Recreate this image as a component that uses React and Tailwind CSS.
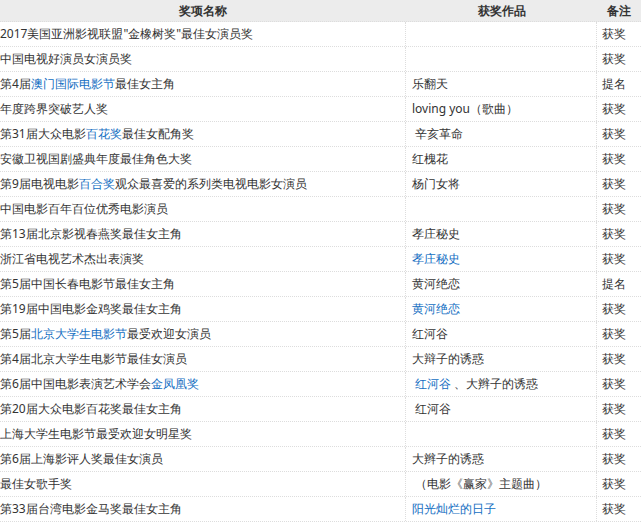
const rows = [
  [['2017美国亚洲影视联盟"金橡树奖"最佳女演员奖'], [''], '获奖'],
  [['中国电视好演员女演员奖'], [''], '获奖'],
  [['第4届', ['澳门国际电影节'], '最佳女主角'], ['乐翻天'], '提名'],
  [['年度跨界突破艺人奖'], ['loving you（歌曲）'], '获奖'],
  [['第31届大众电影', ['百花奖'], '最佳女配角奖'], [' 辛亥革命'], '获奖'],
  [['安徽卫视国剧盛典年度最佳角色大奖'], ['红槐花'], '获奖'],
  [['第9届电视电影', ['百合奖'], '观众最喜爱的系列类电视电影女演员'], ['杨门女将'], '获奖'],
  [['中国电影百年百位优秀电影演员'], [''], '获奖'],
  [['第13届北京影视春燕奖最佳女主角'], ['孝庄秘史'], '获奖'],
  [['浙江省电视艺术杰出表演奖'], [['孝庄秘史']], '获奖'],
  [['第5届中国长春电影节最佳女主角'], ['黄河绝恋'], '提名'],
  [['第19届中国电影金鸡奖最佳女主角'], [['黄河绝恋']], '获奖'],
  [['第5届', ['北京大学生电影节'], '最受欢迎女演员'], ['红河谷'], '获奖'],
  [['第4届北京大学生电影节最佳女演员'], ['大辩子的诱惑'], '获奖'],
  [['第6届中国电影表演艺术学会', ['金凤凰奖']], [' ', ['红河谷'], ' 、大辫子的诱惑'], '获奖'],
  [['第20届大众电影百花奖最佳女主角'], [' 红河谷'], '获奖'],
  [['上海大学生电影节最受欢迎女明星奖'], [''], '获奖'],
  [['第6届上海影评人奖最佳女演员'], ['大辫子的诱惑'], '获奖'],
  [['最佳女歌手奖'], [' （电影《赢家》主题曲）'], '获奖'],
  [['第33届台湾电影金马奖最佳女主角'], [['阳光灿烂的日子']], '获奖'],
];

function Cell({ parts }) {
  return parts.map((p, i) =>
    Array.isArray(p) ? <span key={i} className="text-[#136ec2]">{p[0]}</span> : <span key={i} className="whitespace-pre">{p}</span>
  );
}

export default function App() {
  return (
    <div className="w-[641px] h-[525px] bg-white text-[12px] text-[#333] font-['Liberation_Sans','Noto_Sans_CJK_SC',sans-serif]">
      <div className="flex h-[22px] items-center bg-[#ececec] font-bold text-[#333] border-b border-dotted border-[#ddd]">
        <div className="w-[406px] text-center">奖项名称</div>
        <div className="w-[191px] text-center">获奖作品</div>
        <div className="flex-1 text-center">备注</div>
      </div>
      {rows.map((r, i) => (
        <div key={i} className="flex h-[25px] items-center border-b border-dotted border-[#ddd]">
          <div className="w-[406px] h-full flex items-center border-r border-dotted border-[#ddd] whitespace-nowrap">
            <Cell parts={r[0]} />
          </div>
          <div className="w-[191px] h-full flex items-center pl-[6px] border-r border-dotted border-[#ddd] whitespace-nowrap">
            <Cell parts={r[1]} />
          </div>
          <div className="flex-1 pl-[5px]">{r[2]}</div>
        </div>
      ))}
    </div>
  );
}
